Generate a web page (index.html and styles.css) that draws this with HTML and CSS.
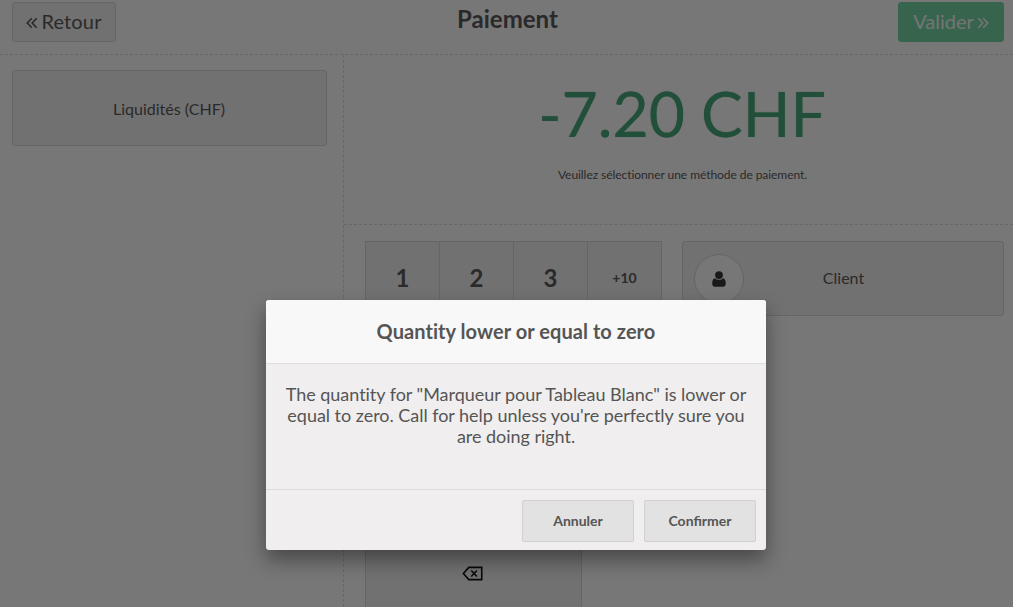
FILE: index.html
```html
<!DOCTYPE html>
<html lang="fr">
<head>
<meta charset="utf-8">
<title>Paiement</title>
<link rel="stylesheet" href="styles.css">
</head>
<body>
<div class="screen">
  <header class="top">
    <button class="nav-btn back"><svg class="dbl" viewBox="0 0 11 11"><path d="M5.3 1.200 1.200 5.500l4.100 4.300M9.800 1.200 5.700 5.500l4.100 4.300"/></svg><span class="label">Retour</span></button>
    <h1 class="title">Paiement</h1>
    <button class="nav-btn next">Valider<svg class="dbl" viewBox="0 0 11 11"><path d="M1.200 1.200 5.300 5.500 1.200 9.800M5.700 1.200 9.800 5.500 5.700 9.800"/></svg></button>
  </header>
  <div class="main">
    <aside class="methods">
      <div class="method">Liquidités (CHF)</div>
    </aside>
    <section class="pay">
      <div class="summary">
        <div class="amount">-7.20 CHF</div>
        <div class="hint">Veuillez sélectionner une méthode de paiement.</div>
      </div>
      <div class="controls">
        <div class="numpad">
          <div class="key">1</div><div class="key">2</div><div class="key">3</div><div class="key small">+10</div>
          <div class="key wide">
            <svg class="erase" viewBox="0 0 20 14"><path d="M6.500 1.200H18.800V12.800H6.500L1.300 7Z"/><path d="M8.800 4.200 14.200 9.800M14.200 4.200 8.800 9.800"/></svg>
          </div>
        </div>
        <div class="client">
          <span class="avatar"><svg class="user" viewBox="0 0 14 16"><circle cx="7" cy="4.100" r="3.900"/><path d="M3 7.200c1 1 2.400 1.500 4 1.500s3-.5 4-1.500c1.800.4 2.800 2 2.800 5.300 0 2-1 3.200-2.600 3.200H2.800C1.200 15.700.2 14.500.2 12.500c0-3.300 1-4.900 2.800-5.300Z"/></svg></span>
          <span class="client-name">Client</span>
        </div>
      </div>
    </section>
  </div>
</div>
<div class="overlay"></div>
<div class="popup">
  <div class="popup-title">Quantity lower or equal to zero</div>
  <p class="popup-body">The quantity for "Marqueur pour Tableau Blanc" is lower or equal to zero. Call for help unless you're perfectly sure you are doing right.</p>
  <div class="popup-footer">
    <button class="popup-btn">Annuler</button>
    <button class="popup-btn">Confirmer</button>
  </div>
</div>
</body>
</html>
```
FILE: styles.css
```css
* { box-sizing: border-box; }
html, body { height: 100%; margin: 0; overflow: hidden; }
body { font-family: Lato, "Liberation Sans", sans-serif; background: #f0eeee; color: #555; }
.screen { height: 607px; display: flex; flex-direction: column; overflow: hidden; }
.top { flex: 0 0 55px; display: flex; justify-content: space-between; align-items: flex-start; padding: 2px 9px 0 12px; border-bottom: 1px dashed #d0cece; }
.nav-btn { height: 40px; font: 20px Lato, sans-serif; border: 1px solid #cacaca; border-radius: 3px; background: #e2e2e2; color: #555; padding: 0 0 2px; display: flex; align-items: center; justify-content: center; gap: 3px; }
.label { letter-spacing: .15px; }
.back { width: 104px; }
.next { width: 106px; background: #6ec89b; border-color: #6ec89b; color: #e8e8e8; }
.dbl { width: 12px; height: 12px; margin-top: 4px; fill: none; stroke: currentColor; stroke-width: 1.500; }
.title { margin: -1px 0 0; font-size: 24px; font-weight: 700; line-height: 36px; color: #555; text-align: center; flex: 1; padding-left: 1px; }
.main { flex: 1; display: flex; min-height: 0; }
.methods { width: 344px; flex: none; border-right: 1px dashed #d0cece; padding: 15px 16px 0 12px; }
.method { height: 76px; display: flex; align-items: center; justify-content: center; font-size: 16px; border: 1px solid #cacaca; border-radius: 3px; background: #e2e2e2; padding-right: 1px; }
.pay { flex: 1; display: flex; flex-direction: column; min-width: 0; }
.summary { height: 170px; flex: none; border-bottom: 1px dashed #d0cece; text-align: center; padding-left: 7px; }
.amount { font-size: 62.500px; line-height: 76px; margin-top: 20px; color: #449f72; text-shadow: 0 0 1px rgba(68,159,114,.9), 0 2px 2px rgba(255,255,255,.45); }
.hint { font-size: 12px; line-height: 16px; margin-top: 16px; margin-left: 1px; letter-spacing: -.06px; }
.controls { display: flex; align-items: flex-start; padding: 16px 9px 0 21px; gap: 20px; }
.numpad { width: 297px; flex: none; display: flex; flex-wrap: wrap; }
.key { width: 75px; height: 75px; display: flex; align-items: center; justify-content: center; padding-bottom: 2px; font-size: 24px; font-weight: 700; background: #e2e2e2; border: 1px solid #cacaca; margin: 0 -1px -1px 0; }
.small { font-size: 14px; }
.wide { width: 217px; margin-top: 222px; padding: 0 3px 3px 0; }
.erase { width: 21px; height: 15px; fill: none; stroke: #111; stroke-width: 1.500; }
.client { flex: 1; height: 75px; display: flex; align-items: center; border: 1px solid #cacaca; border-radius: 3px; background: #e2e2e2; padding: 0 0 2px 11px; font-size: 16px; }
.avatar { width: 50px; height: 50px; margin-top: 2px; border: 1px solid #cacaca; border-radius: 50%; background: #eee; display: flex; align-items: center; justify-content: center; }
.user { width: 14px; height: 16px; fill: #333; }
.client-name { flex: 1; text-align: center; padding-right: 60px; }
.overlay { position: absolute; inset: 0; background: rgba(0,0,0,.5); }
.popup { position: absolute; left: 266px; top: 300px; width: 500px; height: 250px; display: flex; flex-direction: column; background: #f0eeee; border-radius: 3px; box-shadow: 0 10px 20px rgba(0,0,0,.4); }
.popup-title { height: 64px; flex: none; display: flex; align-items: center; justify-content: center; padding-bottom: 2px; font-size: 20px; font-weight: 700; letter-spacing: .06px; background: #f8f8f8; border-bottom: 1px solid #e0dede; border-radius: 3px 3px 0 0; }
.popup-body { flex: 1; margin: 0; padding: 20px 16px 0; font-size: 18px; line-height: 21px; letter-spacing: -.03px; text-align: center; }
.popup-footer { height: 61px; flex: none; border-top: 1px solid #dcdada; display: flex; justify-content: flex-end; align-items: flex-start; gap: 10px; padding: 10px 10px 0 0; }
.popup-btn { width: 112px; height: 42px; font: 700 14px Lato, sans-serif; color: #555; background: #e2e2e2; border: 1px solid #d2d0d0; border-radius: 2px; padding: 0 0 2px; }
```
